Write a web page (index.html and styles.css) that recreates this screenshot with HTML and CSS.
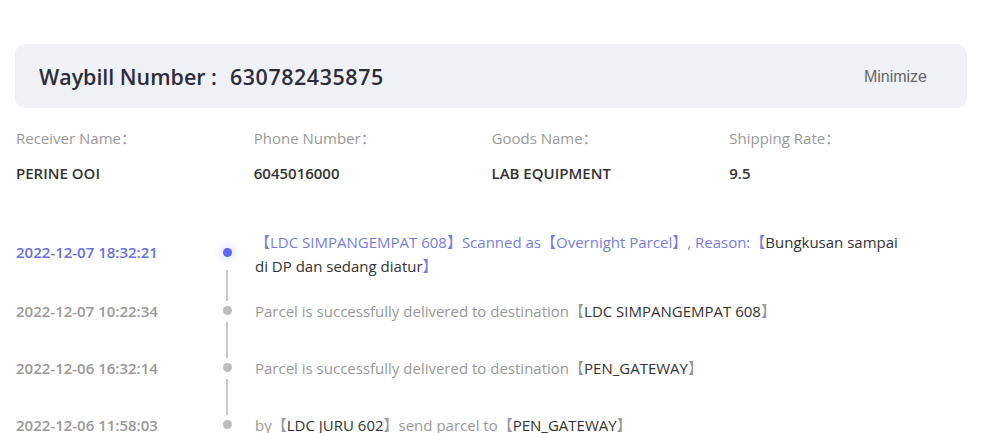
FILE: index.html
```html
<!DOCTYPE html>
<html lang="en">
<head>
  <meta charset="UTF-8" />
  <title>Waybill Tracking</title>
  <meta name="viewport" content="width=device-width, initial-scale=1" />
  <link rel="stylesheet" href="styles.css">
</head>
<body>
  <div class="page">
    <div class="waybill-head">
      <h2>Waybill Number :<span class="no">630782435875</span></h2>
      <span class="toggle">Minimize</span>
    </div>

    <div class="info">
      <div class="info-item">
        <p class="label">Receiver Name：</p>
        <p class="value">PERINE OOI</p>
      </div>
      <div class="info-item">
        <p class="label">Phone Number：</p>
        <p class="value">6045016000</p>
      </div>
      <div class="info-item">
        <p class="label">Goods Name：</p>
        <p class="value">LAB EQUIPMENT</p>
      </div>
      <div class="info-item">
        <p class="label">Shipping Rate：</p>
        <p class="value">9.5</p>
      </div>
    </div>

    <!-- track records -->
    <ul class="track">
      <li class="step active first">
        <span class="time">2022-12-07 18:32:21</span>
        <span class="axis"><i class="dot"></i></span>
        <p class="desc">【LDC SIMPANGEMPAT 608】Scanned as【Overnight Parcel】, Reason:【<b>Bungkusan sampai di DP dan sedang diatur</b>】</p>
      </li>
      <li class="step">
        <span class="time">2022-12-07 10:22:34</span>
        <span class="axis"><i class="dot"></i></span>
        <p class="desc">Parcel is successfully delivered to destination【<b>LDC SIMPANGEMPAT 608</b>】</p>
      </li>
      <li class="step">
        <span class="time">2022-12-06 16:32:14</span>
        <span class="axis"><i class="dot"></i></span>
        <p class="desc">Parcel is successfully delivered to destination【<b>PEN_GATEWAY</b>】</p>
      </li>
      <li class="step">
        <span class="time">2022-12-06 11:58:03</span>
        <span class="axis"><i class="dot"></i></span>
        <p class="desc">by【<b>LDC JURU 602</b>】send parcel to【<b>PEN_GATEWAY</b>】</p>
      </li>
    </ul>
  </div>
</body>
</html>
```

FILE: styles.css
```css
* {
  margin: 0; padding: 0; box-sizing: border-box;
}

html, body {
  background: #fff;
  color: #333;
  font-family: "Open Sans", "Noto Sans CJK SC", sans-serif;
  overflow: hidden;
}

.page {
  padding: 44px 24px 0 15px;
}

.waybill-head {
  display: flex;
  align-items: center;
  justify-content: space-between;
  height: 64px;
  padding: 1px 40px 0 24px;
  background: #f0f1f6;
  border-radius: 10px;
}

.waybill-head h2 {
  font-size: 21.4px;
  font-weight: 600;
  color: #2b2d3b;
}

.waybill-head .no {
  margin-left: 13px;
  letter-spacing: 0.6px;
}

.toggle {
  font-family: "Liberation Sans", Arial, sans-serif;
  font-size: 16px;
  color: #666;
  cursor: pointer;
}

.info {
  display: flex;
  padding: 19px 0 0 1px;
}

.info-item {
  width: 238px;
}

.label {
  font-size: 15px;
  line-height: 22px;
  color: #999;
}

.value {
  margin-top: 13px;
  font-size: 15px;
  line-height: 22px;
  font-weight: 600;
  color: #333;
}

.track {
  list-style: none;
  margin-top: 41px;
  padding-left: 1px;
}

.step {
  display: flex;
  align-items: center;
  height: 57px;
}

.time {
  width: 199px;
  font-size: 15px;
  font-weight: 600;
  color: #999;
}

.axis {
  position: relative;
  width: 24px;
  align-self: stretch;
  display: flex;
  align-items: center;
  justify-content: center;
}

.axis::after {
  content: "";
  position: absolute;
  left: 11px;
  top: calc(50% + 11px);
  width: 2px;
  height: 36px;
  background: #c8c8c8;
}

.step:last-child .axis::after {
  display: none;
}

.dot {
  width: 9px;
  height: 9px;
  border-radius: 50%;
  background: #bdbdbd;
}

.desc {
  width: 652px;
  margin-left: 16px;
  font-size: 15px;
  line-height: 24px;
  color: #999;
}

.desc b {
  font-weight: 400;
  color: #333;
}

.active .time {
  color: #6770dc;
  margin-top: -3px;
}

.active .dot {
  margin-top: -3px;
  background: #5b67ee;
  box-shadow: 0 0 6px 4px rgba(91, 103, 238, 0.12);
}

.active .desc {
  color: #767ee4;
}

.first .axis::after {
  top: calc(50% + 16px);
  height: 31px;
}
```
